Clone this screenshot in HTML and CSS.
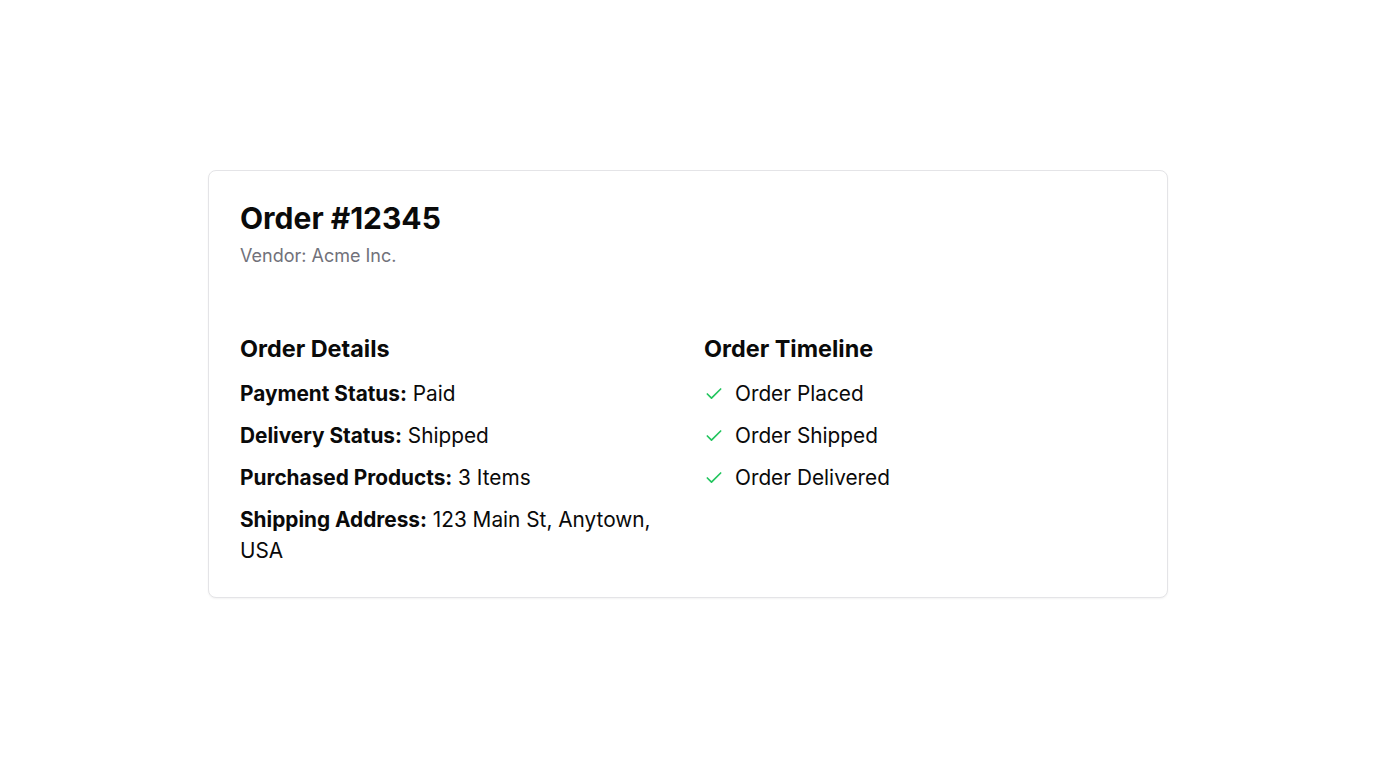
FILE: index.html
```html
<!DOCTYPE html>
<html lang="en">
<head>
<meta charset="utf-8">
<title>Order #12345</title>
<link rel="stylesheet" href="styles.css">
</head>
<body>
<main class="page">
  <section class="card">
    <header class="card-header">
      <h1 class="title">Order #12345</h1>
      <p class="vendor">Vendor: Acme Inc.</p>
    </header>
    <div class="card-content">
      <div class="column">
        <h2 class="section-title">Order Details</h2>
        <div class="rows">
          <p class="row"><strong>Payment Status:</strong> Paid</p>
          <p class="row"><strong>Delivery Status:</strong> Shipped</p>
          <p class="row"><strong>Purchased Products:</strong> 3 Items</p>
          <p class="row"><strong>Shipping Address:</strong> 123 Main St, Anytown, USA</p>
        </div>
      </div>
      <div class="column">
        <h2 class="section-title">Order Timeline</h2>
        <div class="rows">
          <div class="step"><svg class="check" viewBox="0 0 24 24" fill="none" stroke="currentColor" stroke-width="2" stroke-linecap="round" stroke-linejoin="round"><path d="M20 6 9 17l-5-5"/></svg><span>Order Placed</span></div>
          <div class="step"><svg class="check" viewBox="0 0 24 24" fill="none" stroke="currentColor" stroke-width="2" stroke-linecap="round" stroke-linejoin="round"><path d="M20 6 9 17l-5-5"/></svg><span>Order Shipped</span></div>
          <div class="step"><svg class="check" viewBox="0 0 24 24" fill="none" stroke="currentColor" stroke-width="2" stroke-linecap="round" stroke-linejoin="round"><path d="M20 6 9 17l-5-5"/></svg><span>Order Delivered</span></div>
        </div>
      </div>
    </div>
  </section>
</main>
</body>
</html>
```

FILE: styles.css
```css
* { box-sizing: border-box; }
html, body { margin: 0; padding: 0; }
body {
  font-family: Inter, "Noto Sans", sans-serif;
  color: #0a0a0a;
  background: #ffffff;
}
.page {
  min-height: 100vh;
  display: flex;
  align-items: center;
  justify-content: center;
}
.card {
  width: 960px;
  border: 1px solid #e4e4e7;
  border-radius: 8px;
  box-shadow: 0 1px 2px rgba(0, 0, 0, 0.05);
  padding: 32px 31px 31px;
  background: #fff;
}
.card-header {
  display: flex;
  flex-direction: column;
  gap: 9px;
}
.title {
  margin: 0;
  font-size: 30px;
  line-height: 1;
  font-weight: 700;
}
.vendor {
  margin: 0;
  font-size: 18px;
  line-height: 28px;
  color: #71717a;
}
.card-content {
  margin-top: 65px;
  display: grid;
  grid-template-columns: 1fr 1fr;
  gap: 32px;
}
.section-title {
  margin: 0 0 15px;
  font-size: 23.4px;
  line-height: 28px;
  font-weight: 700;
}
.rows {
  display: flex;
  flex-direction: column;
  gap: 11px;
}
.row {
  margin: 0;
  font-size: 20.8px;
  line-height: 31px;
}
.row strong { font-weight: 700; }
.step {
  display: flex;
  align-items: center;
  gap: 11px;
  font-size: 20.8px;
  line-height: 31px;
}
.check {
  width: 20px;
  height: 20px;
  color: #22c55e;
  flex-shrink: 0;
}
```
